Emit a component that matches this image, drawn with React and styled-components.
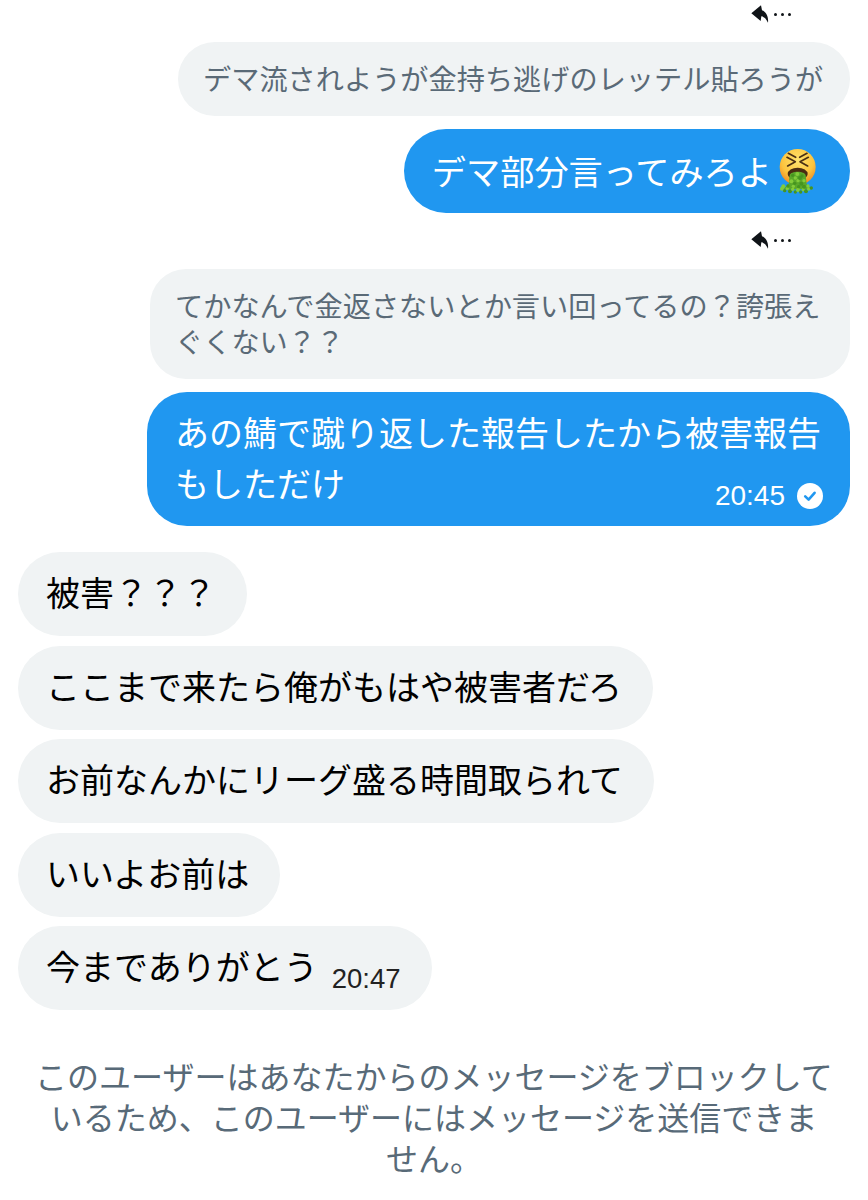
import React from "react";
import styled, { createGlobalStyle } from "styled-components";

const GlobalStyle = createGlobalStyle`
  html, body {
    margin: 0;
    padding: 0;
    background: #fff;
  }
`;

// specks of the splash under the mouth, in the emoji's viewBox units
const specks = [
  [126, 172], [134, 178], [142, 172], [150, 180], [158, 174], [166, 182], [174, 176], [182, 182], [190, 175],
  [198, 180], [206, 173], [214, 170], [130, 165], [144, 164], [204, 164], [192, 166], [160, 165], [176, 166],
  [154, 150], [164, 156], [174, 148], [184, 157], [192, 148], [158, 132], [172, 128], [186, 134], [166, 140], [180, 140],
];

function VomitEmoji() {
  return (
    <EmojiSvg viewBox="108 50 120 141">
      <defs>
        <radialGradient id="face" cx="50%" cy="32%" r="68%">
          <stop offset="0" stopColor="#ffe36e" />
          <stop offset="0.65" stopColor="#fcc43e" />
          <stop offset="1" stopColor="#ee8a24" />
        </radialGradient>
      </defs>
      <circle cx="173" cy="107" r="54" fill="url(#face)" />
      <path d="M145 66 L167 78 M141 78 L166 91 L143 104 M201 66 L179 78 M205 78 L180 91 L203 104" fill="none" stroke="#4a2f14" strokeWidth="5" strokeLinecap="round" strokeLinejoin="round" />
      <ellipse cx="173" cy="128" rx="30" ry="19" fill="#4a2c12" />
      <path d="M149 132 C152 118 194 118 197 132 L200 158 L214 174 L130 174 L146 158 Z" fill="#5aa82a" />
      {specks.map(([x, y], i) => (
        <circle key={i} cx={x} cy={y} r={i % 3 === 0 ? 6 : 5} fill={i % 2 ? "#46951f" : "#82cc3a"} />
      ))}
    </EmojiSvg>
  );
}

function ReplyMark() {
  return (
    <ReplyRow>
      <svg width="20" height="20" viewBox="150 10 60 60">
        <path d="M154 38 L183 14 L186 29 C198 33 206 48 204 66 C198 53 192 48 184 47 L182 61 Z" fill="#101418" />
      </svg>
      <Dots>
        <i />
        <i />
        <i />
      </Dots>
    </ReplyRow>
  );
}

function CheckBadge() {
  return (
    <svg width="26" height="26" viewBox="0 0 26 26">
      <circle cx="13" cy="13" r="13" fill="#fff" />
      <path d="M8.2 13.4 L11.6 16.6 L17.6 9.8" fill="none" stroke="#2097f0" strokeWidth="2.6" strokeLinecap="round" strokeLinejoin="round" />
    </svg>
  );
}

export default function App() {
  return (
    <Page>
      <GlobalStyle />
      <Thread>
        <ReplyMark />
        <Quote>デマ流されようが金持ち逃げのレッテル貼ろうが</Quote>
        <SentBubble>
          デマ部分言ってみろよ
          <VomitEmoji />
        </SentBubble>
        <ReplyMark />
        <Quote $wide>てかなんで金返さないとか言い回ってるの？誇張えぐくない？？</Quote>
        <SentLong>
          あの鯖で蹴り返した報告したから被害報告もしただけ
          <SentMeta>
            20:45
            <CheckBadge />
          </SentMeta>
        </SentLong>
      </Thread>
      <Received>
        <InBubble>被害？？？</InBubble>
        <InBubble>ここまで来たら俺がもはや被害者だろ</InBubble>
        <InBubble>お前なんかにリーグ盛る時間取られて</InBubble>
        <InBubble>いいよお前は</InBubble>
        <InBubble>
          今までありがとう<InTime>20:47</InTime>
        </InBubble>
      </Received>
      <Notice>
        このユーザーはあなたからのメッセージをブロックしているため、このユーザーにはメッセージを送信できま
        <br />
        せん。
      </Notice>
    </Page>
  );
}

const Page = styled.div`
  width: 868px;
  height: 1200px;
  overflow: hidden;
  background: #fff;
  font-family: "Noto Sans CJK JP", "Noto Sans", sans-serif;
`;

const Thread = styled.div`
  display: flex;
  flex-flow: column nowrap;
  align-items: flex-end;
  padding: 0 18px 0 0;
`;

const ReplyRow = styled.div`
  display: flex;
  align-items: center;
  gap: 4px;
  height: 24px;
  margin: 2px 59px 16px 0;
  svg {
    display: block;
  }
`;

const Dots = styled.span`
  display: flex;
  gap: 4px;
  i {
    width: 3px;
    height: 3px;
    border-radius: 50%;
    background: #101418;
  }
`;

const Quote = styled.div`
  box-sizing: border-box;
  width: ${(p) => (p.$wide ? "700px" : "672px")};
  margin-top: ${(p) => (p.$wide ? "1px" : "0")};
  padding: ${(p) => (p.$wide ? "18px 25px 20px" : "14px 25px 16px")};
  background: #f0f3f4;
  border-radius: ${(p) => (p.$wide ? "36px" : "37px")};
  color: #5a6a77;
  font-size: 28.2px;
  line-height: ${(p) => (p.$wide ? "36px" : "44px")};
  white-space: ${(p) => (p.$wide ? "normal" : "nowrap")};
`;

const SentBubble = styled.div`
  display: flex;
  align-items: center;
  box-sizing: border-box;
  height: 84px;
  margin: 13px 0 13px;
  padding: 0 34px 3px 28px;
  background: #2097f0;
  border-radius: 42px;
  color: #fff;
  font-size: 34.2px;
`;

const EmojiSvg = styled.svg`
  width: 40px;
  height: 47px;
  margin: 3px 0 0 4px;
`;

const SentLong = styled.div`
  box-sizing: border-box;
  position: relative;
  width: 703px;
  height: 134px;
  margin-top: 13px;
  padding: 14px 28px;
  background: #2097f0;
  border-radius: 40px;
  color: #fff;
  font-size: 34px;
  line-height: 51px;
`;

const SentMeta = styled.span`
  position: absolute;
  right: 27px;
  bottom: 17px;
  display: flex;
  align-items: center;
  gap: 12px;
  font-family: "Liberation Sans", sans-serif;
  font-size: 28px;
  line-height: 26px;
`;

const Received = styled.div`
  display: flex;
  flex-flow: column nowrap;
  align-items: flex-start;
  gap: 9.5px;
  padding: 26px 0 0 18px;
`;

const InBubble = styled.div`
  display: flex;
  align-items: center;
  box-sizing: border-box;
  height: 84px;
  padding: 0 31px 5px 28px;
  background: #f0f3f4;
  border-radius: 42px;
  color: #000;
  font-size: 34px;
`;

const InTime = styled.span`
  margin: 26px 0 0 14px;
  font-family: "Liberation Sans", sans-serif;
  font-size: 27.5px;
  color: #222;
`;

const Notice = styled.div`
  box-sizing: border-box;
  padding: 45px 30px 0;
  text-align: center;
  color: #586a78;
  font-size: 32px;
  line-height: 41px;
`;
